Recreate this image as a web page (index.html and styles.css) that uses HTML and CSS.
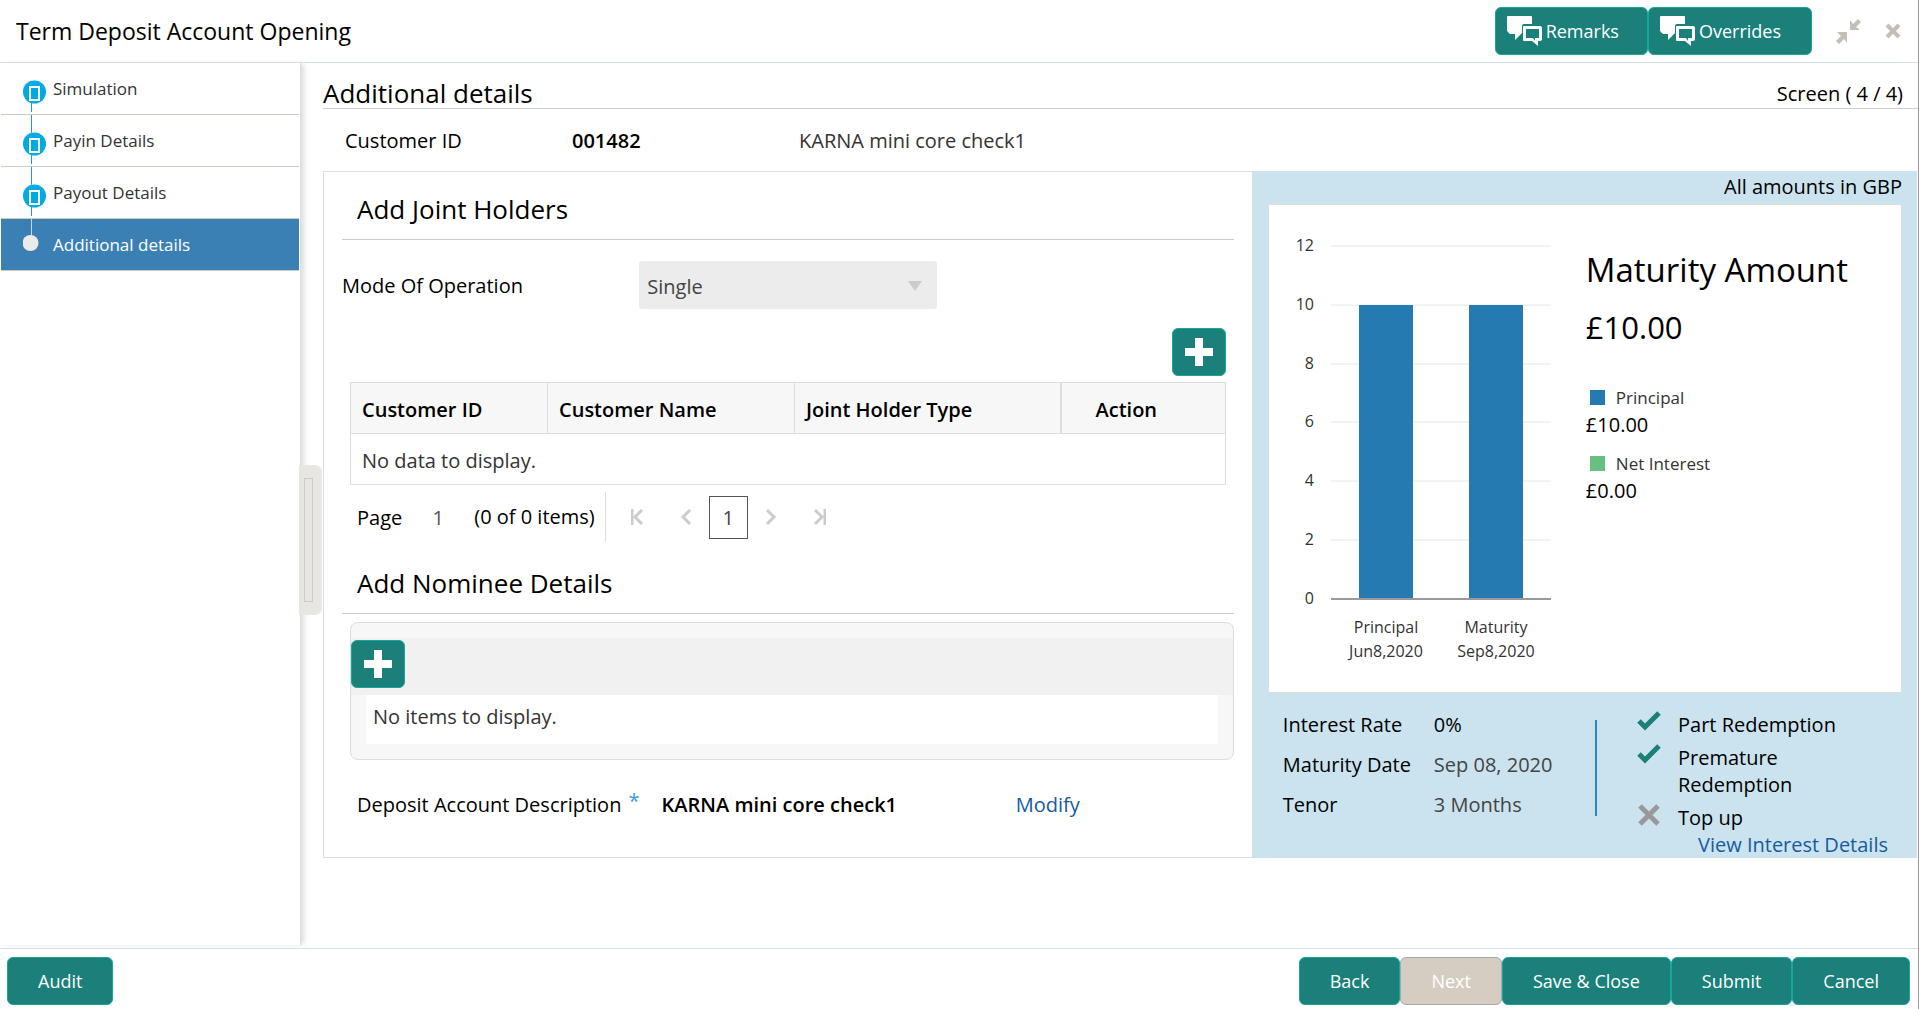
FILE: index.html
```html
<!DOCTYPE html>
<html lang="en">
<head>
    <meta charset="UTF-8">
    <meta name="viewport" content="width=device-width, initial-scale=1.0">
    <title>Term Deposit Account Opening</title>
    <link rel="stylesheet" href="styles.css">
</head>
<body>

    <!-- Shared icons -->
    <svg class="icon-defs" aria-hidden="true">
        <symbol id="icon-chat" viewBox="0 0 35 31">
            <path fill="#fff" d="M1 0h23q1 0 1 1v7h-8q-2 0-2 2v7l-7 7v-6h-5l-3-3V1q0-1 1-1z"/>
            <path fill="#fff" fill-rule="evenodd" d="M17 10h16q2 0 2 2v11q0 2-2 2h-2v5l-6-5h-8q-1 0-1-1V11q0-1 1-1zM19 13v9h7l2 3v-3h4v-9z"/>
        </symbol>
        <symbol id="icon-plus" viewBox="0 0 28 28">
            <path fill="#fff" d="M10 0h8v10h10v8H18v10h-8V18H0v-8h10z"/>
        </symbol>
        <symbol id="icon-done" viewBox="0 0 24 51">
            <circle cx="7.5" cy="25" r="7.5" fill="#e8e8e8"/>
            <path d="M8 39h1v10h-1z" fill="#1a9dc6"/>
            <circle cx="11.5" cy="29" r="11.5" fill="#00abe3"/>
            <rect x="7" y="24" width="9" height="13" fill="none" stroke="#fff" stroke-width="2"/>
        </symbol>
        <symbol id="icon-check" viewBox="0 0 24 20">
            <path d="M2 10l6 6L22 2" fill="none" stroke="#1b7f7a" stroke-width="5"/>
        </symbol>
        <symbol id="icon-cross" viewBox="0 0 22 22">
            <path d="M2 2l18 18M20 2L2 20" fill="none" stroke="#999" stroke-width="5"/>
        </symbol>
    </svg>

    <!-- Title bar -->
    <header class="title-bar">
        <h1>Term Deposit Account Opening</h1>
        <button type="button" class="btn btn-chat"><svg width="35" height="31"><use href="#icon-chat"/></svg>Remarks</button>
        <button type="button" class="btn btn-chat btn-overrides"><svg width="35" height="31"><use href="#icon-chat"/></svg>Overrides</button>
        <button type="button" class="icon-button" aria-label="Minimize">
            <svg width="25" height="25" viewBox="0 0 25 25" fill="#c4beb6">
                <path d="M14 1v10h10l-4-3 5-5-3-3-5 5z"/>
                <path d="M11 24V13H1l4 4-5 5 3 3 5-5z"/>
            </svg>
        </button>
        <button type="button" class="icon-button" aria-label="Close">
            <svg width="16" height="16" viewBox="0 0 16 16">
                <path d="M2 2l12 12M14 2L2 14" stroke="#c4beb6" stroke-width="4"/>
            </svg>
        </button>
    </header>

    <div class="workspace">

        <!-- Steps -->
        <nav class="steps">
            <ul>
                <li><a href="#"><svg width="24" height="51"><use href="#icon-done"/></svg>Simulation</a></li>
                <li><a href="#"><svg width="24" height="51"><path d="M8 0h1v18h-1z" fill="#1a9dc6"/><use href="#icon-done"/></svg>Payin Details</a></li>
                <li><a href="#"><svg width="24" height="51"><path d="M8 0h1v18h-1z" fill="#1a9dc6"/><use href="#icon-done"/></svg>Payout Details</a></li>
                <li class="active"><a href="#"><svg width="24" height="51"><path d="M8 0h1v18h-1z" fill="#c5d6e4"/><circle cx="7.5" cy="24" r="8" fill="#ebebeb"/></svg>Additional details</a></li>
            </ul>
            <button type="button" class="splitter" aria-label="Resize steps"><span></span></button>
        </nav>

        <main class="content">
            <div class="screen-head">
                <h2>Additional details</h2>
                <span>Screen ( 4 / 4)</span>
            </div>

            <div class="customer-row">
                <span>Customer ID</span>
                <strong>001482</strong>
                <span class="muted">KARNA mini core check1</span>
            </div>

            <div class="columns">
                <section class="form-panel">
                    <h3>Add Joint Holders</h3>
                    <div class="field-row">
                        <label for="mode">Mode Of Operation</label>
                        <div class="select-wrap">
                            <select id="mode" disabled>
                                <option>Single</option>
                            </select>
                            <svg width="14" height="10" viewBox="0 0 14 10"><path d="M0 0h14L7 10z" fill="#ccc"/></svg>
                        </div>
                    </div>

                    <div class="table-block">
                        <button type="button" class="btn btn-add" aria-label="Add joint holder"><svg width="28" height="28"><use href="#icon-plus"/></svg></button>
                        <table>
                            <thead>
                                <tr>
                                    <th class="col-id">Customer ID</th>
                                    <th class="col-name">Customer Name</th>
                                    <th class="col-type">Joint Holder Type</th>
                                    <th class="col-action">Action</th>
                                </tr>
                            </thead>
                            <tbody>
                                <tr><td colspan="4">No data to display.</td></tr>
                            </tbody>
                        </table>
                    </div>

                    <div class="pager">
                        <label for="page">Page</label>
                        <input type="text" id="page" value="1">
                        <span class="pager-count">(0 of 0 items)</span>
                        <button type="button" aria-label="First page"><svg width="12" height="16" viewBox="0 0 12 16"><path d="M1 0v16M11 1L4 8l7 7"/></svg></button>
                        <button type="button" aria-label="Previous page"><svg width="12" height="16" viewBox="0 0 12 16"><path d="M10 1L3 8l7 7"/></svg></button>
                        <button type="button" class="current">1</button>
                        <button type="button" aria-label="Next page"><svg width="12" height="16" viewBox="0 0 12 16"><path d="M2 1l7 7-7 7"/></svg></button>
                        <button type="button" aria-label="Last page"><svg width="12" height="16" viewBox="0 0 12 16"><path d="M11 0v16M1 1l7 7-7 7"/></svg></button>
                    </div>

                    <h3 class="nominee-title">Add Nominee Details</h3>
                    <div class="nominee-box">
                        <div class="nominee-toolbar">
                            <button type="button" class="btn btn-add" aria-label="Add nominee"><svg width="28" height="28"><use href="#icon-plus"/></svg></button>
                        </div>
                        <p>No items to display.</p>
                    </div>

                    <div class="description-row">
                        <span>Deposit Account Description <sup>*</sup></span>
                        <strong>KARNA mini core check1</strong>
                        <a href="#">Modify</a>
                    </div>
                </section>

                <aside class="summary">
                    <p class="currency-note">All amounts in GBP</p>
                    <div class="chart-card">
                        <svg class="chart" width="300" height="487" viewBox="0 0 300 487" role="img" aria-label="Principal and maturity amounts">
                            <path class="grid-line" d="M62 41h220M62 100h220M62 159h220M62 217h220M62 276h220M62 335h220"/>
                            <path class="bar" d="M90 100h54v294H90zM200 100h54v294h-54z"/>
                            <path class="axis" d="M62 394h220"/>
                            <g text-anchor="end">
                                <text x="45" y="46">12</text>
                                <text x="45" y="105">10</text>
                                <text x="45" y="164">8</text>
                                <text x="45" y="222">6</text>
                                <text x="45" y="281">4</text>
                                <text x="45" y="340">2</text>
                                <text x="45" y="399">0</text>
                            </g>
                            <g text-anchor="middle">
                                <text x="117" y="428">Principal</text>
                                <text x="117" y="452">Jun8,2020</text>
                                <text x="227" y="428">Maturity</text>
                                <text x="227" y="452">Sep8,2020</text>
                            </g>
                        </svg>
                        <div class="maturity">
                            <h2>Maturity Amount</h2>
                            <p class="total">£10.00</p>
                            <p class="legend"><i class="principal"></i>Principal</p>
                            <p>£10.00</p>
                            <p class="legend"><i class="interest"></i>Net Interest</p>
                            <p>£0.00</p>
                        </div>
                    </div>
                    <div class="details">
                        <dl>
                            <dt>Interest Rate</dt><dd class="rate">0%</dd>
                            <dt>Maturity Date</dt><dd>Sep 08, 2020</dd>
                            <dt>Tenor</dt><dd>3 Months</dd>
                        </dl>
                        <ul>
                            <li><svg width="24" height="20"><use href="#icon-check"/></svg>Part Redemption</li>
                            <li><svg width="24" height="20"><use href="#icon-check"/></svg>Premature Redemption</li>
                            <li><svg width="24" height="22"><use href="#icon-cross"/></svg>Top up</li>
                        </ul>
                    </div>
                    <a class="interest-link" href="#">View Interest Details</a>
                </aside>
            </div>
        </main>
    </div>

    <!-- Bottom actions -->
    <footer class="actions">
        <button type="button" class="btn btn-audit">Audit</button>
        <button type="button" class="btn">Back</button>
        <button type="button" class="btn" disabled>Next</button>
        <button type="button" class="btn">Save &amp; Close</button>
        <button type="button" class="btn">Submit</button>
        <button type="button" class="btn">Cancel</button>
    </footer>

</body>
</html>
```
FILE: styles.css
```css
/* General body and layout */
* {
    box-sizing: border-box;
}

body {
    margin: 0;
    min-height: 100vh;
    display: flex;
    flex-direction: column;
    border-right: 1px solid #999;
    background-color: #fff;
    color: #000;
    font-family: "Open Sans", "Noto Sans", sans-serif;
    font-size: 20px;
    line-height: 27px;
}

h1, h2, h3, p, ul, dl, dd {
    margin: 0;
    padding: 0;
    font-weight: normal;
}

ul {
    list-style: none;
}

a {
    color: #145c9e;
    text-decoration: none;
}

strong {
    font-weight: 600;
}

button, input, select {
    font-family: inherit;
    font-size: inherit;
    line-height: inherit;
}

.icon-defs {
    position: absolute;
    width: 0;
    height: 0;
}

/* Buttons */
.btn {
    height: 48px;
    padding: 0 30px;
    background-color: #1b7f7a;
    color: #fff;
    border: 1px solid #16a89a;
    border-radius: 6px;
    font-size: 18px;
    cursor: pointer;
}

.btn:disabled {
    background-color: #d5cdc2;
    border-color: #a5aaa9;
    cursor: default;
}

.btn-chat {
    display: flex;
    align-items: center;
    gap: 4px;
    padding: 0 28px 0 11px;
}

.btn-overrides {
    padding-right: 30px;
}

.btn-add {
    display: flex;
    align-items: center;
    justify-content: center;
    width: 54px;
    padding: 0;
}

.icon-button {
    display: flex;
    padding: 0;
    background: none;
    border: none;
    cursor: pointer;
}

/* Title bar */
.title-bar {
    display: flex;
    align-items: center;
    height: 63px;
    padding: 0 17px 0 16px;
    border-bottom: 1px solid #d6dfe6;
}

.title-bar h1 {
    flex: 1;
    font-size: 23px;
}

.title-bar .icon-button {
    margin-left: 24px;
}

/* Steps */
.workspace {
    flex: 1;
    display: flex;
}

.steps {
    position: relative;
    flex: 0 0 301px;
    margin-bottom: 3px;
    padding: 0 1px;
    border-right: 1px solid #d6dfe6;
    box-shadow: 4px 0 5px -1px #ddd;
}

.steps li {
    border-bottom: 1px solid #cdcac2;
}

.steps a {
    display: flex;
    align-items: center;
    gap: 6px;
    height: 51px;
    padding-left: 22px;
    color: #333;
    font-size: 17px;
}

.steps .active a {
    background-color: #3b80b4;
    color: #fff;
}

.splitter {
    position: absolute;
    top: 402px;
    right: -22px;
    width: 23px;
    height: 150px;
    padding: 0;
    display: flex;
    align-items: center;
    justify-content: center;
    background-color: #e8e6e2;
    border: none;
    border-radius: 0 7px 7px 0;
    cursor: col-resize;
}

.splitter span {
    width: 9px;
    height: 124px;
    margin-right: 4px;
    border: 1px solid #ccc;
}

/* Content */
.content {
    flex: 1;
    padding: 0 0 90px 22px;
}

.screen-head {
    display: flex;
    align-items: flex-end;
    justify-content: space-between;
    height: 46px;
    padding: 0 15px 1px 0;
    border-bottom: 1px solid #ccc;
}

.screen-head h2 {
    font-size: 26px;
}

.customer-row {
    display: grid;
    grid-template-columns: 227px 227px 1fr;
    align-items: center;
    height: 62px;
    padding-left: 22px;
}

.muted {
    color: #333;
}

.columns {
    display: grid;
    grid-template-columns: 7fr 5fr;
    padding-right: 1px;
}

/* Form panel */
.form-panel {
    padding: 0 18px;
    border: 1px solid #ddd;
}

.form-panel h3 {
    height: 68px;
    padding: 24px 15px 0;
    border-bottom: 1px solid #ccc;
    font-size: 26px;
}

.field-row {
    display: grid;
    grid-template-columns: 1fr 2fr;
    align-items: center;
    margin-top: 21px;
}

.select-wrap {
    position: relative;
    width: 50%;
}

.select-wrap select {
    display: block;
    width: 100%;
    height: 48px;
    padding: 2px 8px 0;
    appearance: none;
    background-color: #ececec;
    border: none;
    border-radius: 3px;
    color: #444;
    opacity: 1;
}

.select-wrap svg {
    position: absolute;
    top: 20px;
    right: 15px;
}

.table-block {
    margin: 19px 8px 0;
}

.table-block .btn-add {
    margin-left: auto;
}

table {
    width: 100%;
    margin-top: 6px;
    border-collapse: collapse;
    table-layout: fixed;
}

th, td {
    height: 51px;
    padding: 2px 11px 0;
    border: 1px solid #ddd;
    text-align: left;
    color: #333;
}

th {
    background-color: #f7f7f7;
    color: #000;
    font-weight: 600;
}

.col-id {
    width: 197px;
}

.col-name {
    width: 247px;
}

.col-type {
    width: 266px;
}

th.col-action {
    padding-left: 34px;
    border-left-width: 2px;
}

/* Pager */
.pager {
    display: flex;
    align-items: center;
    height: 50px;
    margin: 7px 0 0 15px;
}

.pager input {
    width: 72px;
    padding: 0;
    background: none;
    border: none;
    color: #555;
    text-align: center;
}

.pager-count {
    padding-right: 10px;
    border-right: 1px solid #ddd;
    line-height: 50px;
}

.pager button {
    display: flex;
    justify-content: center;
    align-items: center;
    width: 36px;
    height: 43px;
    margin-left: 13px;
    padding: 0;
    background: none;
    border: none;
}

.pager .current {
    width: 39px;
    margin: 0 -8px 0 5px;
    border: 1px solid #555;
    color: #444;
}

.pager svg {
    fill: none;
    stroke: #ccc;
    stroke-width: 3;
}

/* Nominee */
.form-panel .nominee-title {
    height: 72px;
    padding-top: 28px;
}

.nominee-box {
    margin: 8px 0 0 8px;
    padding: 15px 0;
    background-color: #f7f7f7;
    border: 1px solid #ddd;
    border-radius: 8px;
}

.nominee-toolbar {
    padding: 2px 0 7px;
    background-color: #f1f1f1;
}

.nominee-box p {
    height: 49px;
    margin: 0 15px;
    padding: 8px 7px;
    background-color: #fff;
    color: #333;
}

.description-row {
    display: flex;
    align-items: center;
    height: 97px;
    padding: 0 154px 8px 15px;
}

.description-row sup {
    margin-left: 2px;
    color: #3a9bdc;
    font-size: 20px;
    line-height: 0;
    vertical-align: 4px;
}

.description-row strong {
    margin-left: 22px;
}

.description-row a {
    margin-left: auto;
}

/* Summary */
.summary {
    background-color: #cae3ee;
    padding: 0 15px;
}

.currency-note {
    height: 33px;
    line-height: 31px;
    text-align: right;
}

.chart-card {
    display: flex;
    background-color: #fff;
    border: 1px solid #ddd;
}

.chart {
    flex: none;
    font-size: 16px;
    fill: #333;
}

.grid-line {
    stroke: #e4e8ec;
}

.bar {
    fill: #247ab1;
}

.axis {
    stroke: #9a9a9a;
    stroke-width: 2;
}

.maturity {
    padding: 38px 0 0 17px;
}

.maturity h2 {
    font-size: 33px;
    line-height: 54px;
}

.maturity .total {
    margin-bottom: 27px;
    font-size: 31px;
    line-height: 60px;
}

.maturity .legend {
    display: flex;
    align-items: center;
    gap: 11px;
    padding-left: 4px;
    margin-top: 12px;
    color: #333;
    font-size: 17px;
}

.legend i {
    width: 15px;
    height: 15px;
    background-color: #247ab1;
}

.legend .interest {
    background-color: #68bf82;
}

.details {
    display: flex;
    justify-content: space-between;
    padding: 18px 0 0 15px;
}

.details dl {
    display: grid;
    grid-template-columns: 151px 163px;
    row-gap: 13px;
    align-content: start;
    height: 105px;
    background: linear-gradient(#2f86b8, #2f86b8) no-repeat right bottom / 2px 96px;
}

.details dd {
    color: #444;
}

.details .rate {
    color: #000;
}

.details ul {
    width: 265px;
    padding-right: 60px;
}

.details li {
    display: flex;
    gap: 17px;
    margin-bottom: 6px;
}

.details li:last-child {
    margin-bottom: 0;
}

.details li svg {
    flex: none;
}

.interest-link {
    display: block;
    padding-right: 14px;
    text-align: right;
}

/* Bottom actions */
.actions {
    display: flex;
    height: 61px;
    padding: 8px 8px 0 7px;
    border-top: 1px solid #d6dfe6;
}

.btn-audit {
    margin-right: auto;
}
```
